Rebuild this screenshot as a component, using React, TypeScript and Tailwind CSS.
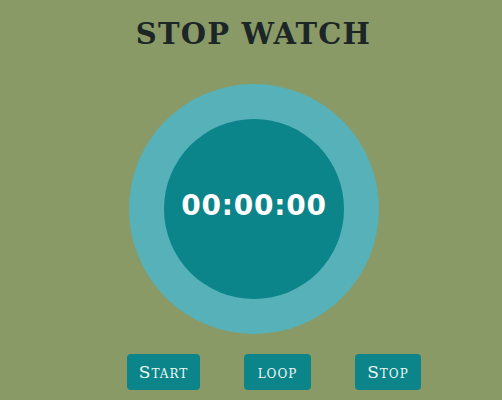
import React from "react";

export default function App() {
  return (
    <div className="w-[502px] h-[400px] bg-[#8a9a66] overflow-hidden flex flex-col items-center">
      <h1
        className="mt-[16px] h-[36px] text-[29px] leading-[36px] font-bold text-[#1d2626] tracking-[1.2px] ml-[5px]"
        style={{ fontFamily: '"DejaVu Serif", serif' }}
      >
        STOP WATCH
      </h1>
      <div className="mt-[32px] ml-[6px] w-[250px] h-[250px] rounded-full bg-[#56b1b8] flex items-center justify-center">
        <div className="w-[180px] h-[180px] rounded-full bg-[#0b848a] flex items-center justify-center">
          <span
            className="text-[28px] font-bold text-white tracking-[0.8px] leading-none pb-[7px]"
            style={{ fontFamily: '"DejaVu Sans", sans-serif' }}
          >
            00:00:00
          </span>
        </div>
      </div>
      <div
        className="mt-[20px] ml-[46px] flex gap-[44px] text-[#eef7f2] text-[17px] tracking-[1px] [font-variant:small-caps]"
        style={{ fontFamily: '"DejaVu Serif", serif' }}
      >
        <button className="w-[73px] h-[36px] rounded-[4px] bg-[#0b848a] flex items-center justify-center leading-none">
          Start
        </button>
        <button className="w-[67px] h-[36px] rounded-[4px] bg-[#0b848a] flex items-center justify-center leading-none">
          loop
        </button>
        <button className="w-[66px] h-[36px] rounded-[4px] bg-[#0b848a] flex items-center justify-center leading-none">
          Stop
        </button>
      </div>
    </div>
  );
}
